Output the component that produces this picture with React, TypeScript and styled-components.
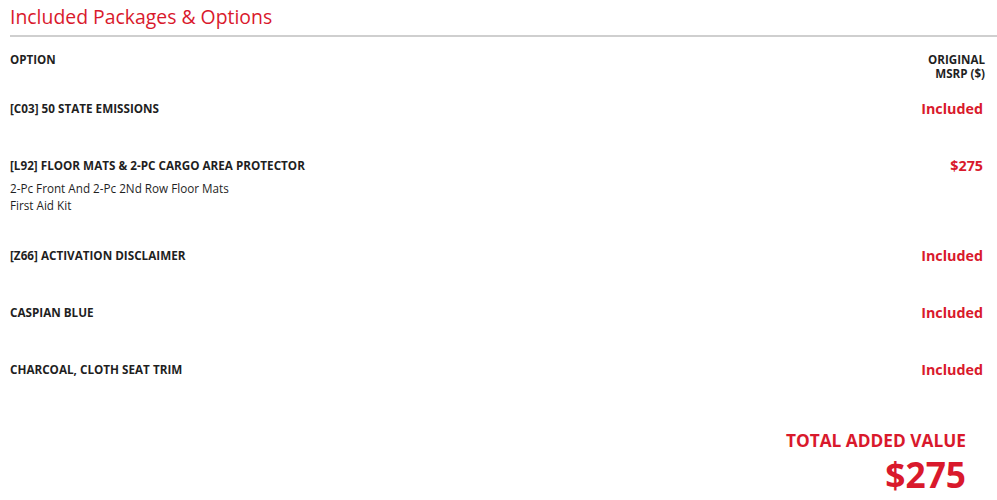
import React from "react";
import styled, { createGlobalStyle } from "styled-components";

const Global = createGlobalStyle`
  html, body { margin: 0; padding: 0; background: #fff; }
  body { font-family: "Open Sans", "Liberation Sans", sans-serif; color: #1f1f1f; }
`;

const RED = "#d9192c";

const Wrap = styled.div`
  padding: 0 12px 0 10px;
`;

const Title = styled.h2`
  margin: 0 -12px 0 0;
  padding-top: 3px;
  padding-bottom: 4px;
  font-size: 19.4px;
  line-height: 28px;
  font-weight: 400;
  color: ${RED};
  border-bottom: 2px solid #cfcfcf;
`;

const HeaderRow = styled.div`
  display: flex;
  justify-content: space-between;
  align-items: flex-start;
  padding-top: 16px;
  padding-bottom: 2px;
  font-size: 11.6px;
  line-height: 14px;
  font-weight: 700;
  text-transform: uppercase;
`;

const HeadRight = styled.div`
  text-align: right;
  display: flex;
  flex-direction: column;
  align-items: flex-end;
`;

const Row = styled.div`
  display: flex;
  justify-content: space-between;
  align-items: flex-start;
  padding: 17px 0;
`;

const Left = styled.div`
  display: flex;
  flex-direction: column;
`;

const Name = styled.div`
  font-size: 11.7px;
  line-height: 17px;
  font-weight: 700;
  text-transform: uppercase;
  margin-bottom: 6px;
`;

const DescList = styled.div`
  display: flex;
  flex-direction: column;
  margin-bottom: -1px;
`;

const Desc = styled.div`
  font-size: 11.7px;
  line-height: 17px;
  font-weight: 400;
`;

const Price = styled.div`
  font-size: 14.3px;
  line-height: 17px;
  font-weight: 700;
  color: ${RED};
  padding-right: 2px;
`;

const Total = styled.div`
  display: flex;
  flex-direction: column;
  align-items: flex-end;
  padding-top: 28px;
  padding-right: 19px;
  color: ${RED};
  font-weight: 700;
  text-transform: uppercase;
`;

const TotalLabel = styled.div`
  font-size: 17.3px;
  line-height: 24px;
`;

const TotalValue = styled.div`
  font-size: 35.3px;
  line-height: 44px;
  margin-top: -1px;
`;

type Item = { name: string; price: string; desc?: string[] };

const items: Item[] = [
  { name: "[C03] 50 State Emissions", price: "Included" },
  {
    name: "[L92] Floor Mats & 2-Pc Cargo Area Protector",
    price: "$275",
    desc: ["2-Pc Front And 2-Pc 2Nd Row Floor Mats", "First Aid Kit"],
  },
  { name: "[Z66] Activation Disclaimer", price: "Included" },
  { name: "Caspian Blue", price: "Included" },
  { name: "Charcoal, Cloth Seat Trim", price: "Included" },
];

export default function App() {
  return (
    <Wrap>
      <Global />
      <Title>Included Packages &amp; Options</Title>
      <HeaderRow>
        <div>Option</div>
        <HeadRight>
          <span>Original</span>
          <span>MSRP ($)</span>
        </HeadRight>
      </HeaderRow>
      {items.map((it) => (
        <Row key={it.name}>
          <Left>
            <Name>{it.name}</Name>
            {it.desc && (
              <DescList>
                {it.desc.map((d) => (
                  <Desc key={d}>{d}</Desc>
                ))}
              </DescList>
            )}
          </Left>
          <Price>{it.price}</Price>
        </Row>
      ))}
      <Total>
        <TotalLabel>Total Added Value</TotalLabel>
        <TotalValue>$275</TotalValue>
      </Total>
    </Wrap>
  );
}
